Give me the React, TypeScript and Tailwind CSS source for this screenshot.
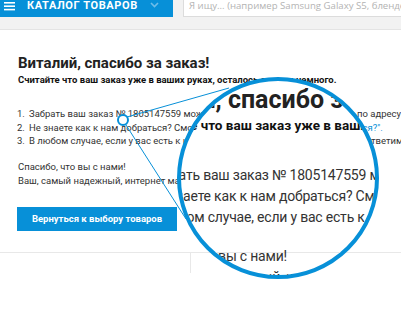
export default function App() {
  return (
    <div className="relative h-[315px] w-[401px] overflow-hidden bg-white font-['Roboto','Liberation_Sans',sans-serif] text-[#333]">
      {/* top bar */}
      <header className="border-b border-[#e4e4e4] bg-[#f2f2f2]">
        <div className="flex h-[17px]">
          <div className="flex w-[173px] shrink-0 items-start bg-[#0790d8] pl-[4px] text-white">
            <svg width="11" height="9" viewBox="0 0 11 9" className="mt-[2px] shrink-0">
              <rect x="0" y="0" width="11" height="1.6" fill="white" />
              <rect x="0" y="3.4" width="11" height="1.6" fill="white" />
              <rect x="0" y="6.8" width="11" height="1.6" fill="white" />
            </svg>
            <span className="ml-[12px] text-[11px] font-bold leading-[11px] tracking-[0.6px]">
              КАТАЛОГ ТОВАРОВ
            </span>
            <svg width="9" height="6" viewBox="0 0 9 6" className="ml-[12px] mt-[2px] shrink-0">
              <polyline points="1,1 4.5,4.5 8,1" fill="none" stroke="#6fbde9" strokeWidth="1.6" />
            </svg>
          </div>
          <div className="ml-[10px] flex-1 border-b border-l border-[#dcdcdc] bg-white pl-[5px] pt-[1px]">
            <span className="block whitespace-nowrap font-['Open_Sans',sans-serif] text-[9.6px] leading-[10px] text-[#b3b3b3]">
              Я ищу... (например Samsung Galaxy S5, блендер)
            </span>
          </div>
        </div>
        <div className="h-[12px]" />
      </header>

      <main className="px-[18px]">
        <h1 className="mt-[24px] whitespace-nowrap text-[15px] font-bold leading-[18px] text-[#222]">
          Виталий, спасибо за заказ!
        </h1>
        <p className="mt-[2px] whitespace-nowrap text-[9.5px] font-bold leading-[12px] text-[#111]">
          Считайте что ваш заказ уже в ваших руках, осталось совсем немного.
        </p>
        <ol className="-ml-px mt-[21px] whitespace-nowrap text-[9.5px] leading-[13.5px]">
          <li className="flex">
            <span className="w-[12px] shrink-0">1.</span>
            <span>Забрать ваш заказ № 1805147559 можно в нашем фирменном магазине по адресу Севастопольская, 1</span>
          </li>
          <li className="flex">
            <span className="w-[12px] shrink-0">2.</span>
            <span>
              Не знаете как к нам добраться? Смотрите на странице{' '}
              <span className="text-[#0790d8]">"Как к нам добраться?".</span>
            </span>
          </li>
          <li className="flex">
            <span className="w-[12px] shrink-0">3.</span>
            <span>
              В любом случае, если у вас есть к нам какие-нибудь вопросы, звоните, мы ответим на все
            </span>
          </li>
        </ol>
        <p className="mt-[12.5px] whitespace-nowrap text-[9.5px] leading-[13.5px]">Спасибо, что вы с нами!</p>
        <p className="whitespace-nowrap text-[9.5px] leading-[13.5px]">
          Ваш, самый надежный, интернет магазин бытовой техники
        </p>
        <button className="-ml-px mt-[20px] h-[24px] w-[160px] bg-[#0790d8] text-[9.5px] font-bold text-white">
          Вернуться к выбору товаров
        </button>
      </main>

      <div className="mt-[21px] border-t border-[#e8e8e8]">
        <div className="ml-[190px] h-[20px] border-l border-[#e8e8e8]" />
      </div>

      {/* magnifier */}
      <svg className="pointer-events-none absolute left-0 top-0" width="401" height="315">
        <line x1="127" y1="117" x2="229" y2="88" stroke="#0790d8" strokeWidth="1" />
        <line x1="126" y1="125" x2="186" y2="219" stroke="#0790d8" strokeWidth="1" />
        <circle cx="123" cy="120" r="5" fill="white" stroke="#0790d8" strokeWidth="2" />
      </svg>
      <div className="absolute left-[177px] top-[77px] h-[202px] w-[202px] overflow-hidden rounded-full border-4 border-[#0790d8] bg-white">
        <div className="absolute left-0 right-0 top-[171px] h-px bg-[#e8e8e8]" />
        <div className="absolute left-[-60px] top-[3.5px] whitespace-nowrap">
          <div className="-ml-[4px] text-[25px] font-bold leading-[30px] text-[#222]">
            Виталий, спасибо за заказ!
          </div>
          <div className="ml-[17px] text-[13.5px] font-bold leading-[20px] text-[#111]">
            Считайте что ваш заказ уже в ваших руках, осталось совсем немного.
          </div>
          <div className="ml-[9px] mt-[30.4px] text-[14px] leading-[21px] tracking-[-0.2px]">
            <div className="flex">
              <span className="w-[18px] shrink-0">1.</span>
              <span>Забрать ваш заказ № 1805147559 можно</span>
            </div>
            <div className="flex">
              <span className="w-[18px] shrink-0">2.</span>
              <span>Не знаете как к нам добраться? Смотрите</span>
            </div>
            <div className="flex">
              <span className="w-[18px] shrink-0">3.</span>
              <span>В любом случае, если у вас есть к нам</span>
            </div>
          </div>
          <div className="ml-[12px] mt-[18.5px] text-[14px] leading-[21px] tracking-[-0.2px]">
            <div>Спасибо, что вы с нами!</div>
            <div>Ваш, самый надежный, интернет магазин</div>
          </div>
        </div>
      </div>
    </div>
  );
}
